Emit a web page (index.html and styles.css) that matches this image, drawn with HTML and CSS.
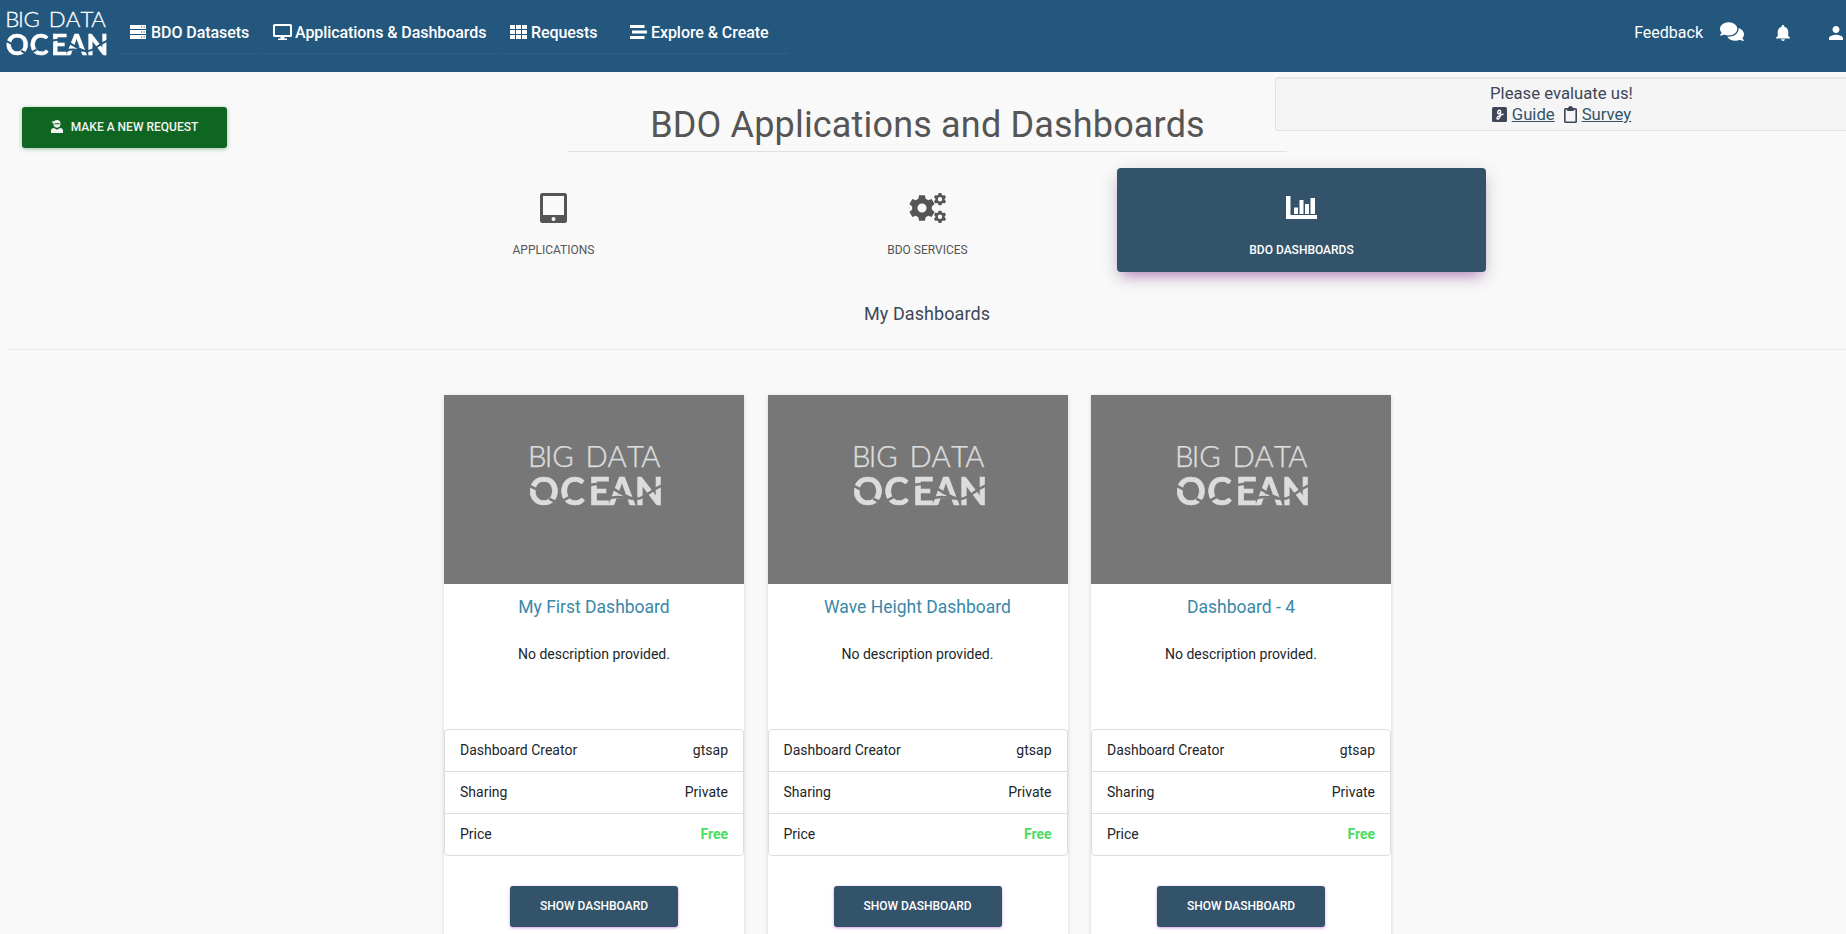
FILE: index.html
```
<!DOCTYPE html>
<html lang="en">
<head>
<meta charset="utf-8">
<title>BDO Applications and Dashboards</title>
<link rel="stylesheet" href="styles.css">
</head>
<body>
<svg class="defs" width="0" height="0">
  <defs>
    <mask id="wave" maskUnits="userSpaceOnUse" x="-5" y="-5" width="145" height="75">
      <rect x="-5" y="-5" width="145" height="75" fill="#fff"/>
      <path d="M-2 38.500L8 43.500M19 52L29 57M29 56L39 50.500M60 38.500Q69 36 77 39.500C86 43 94 51 106 53M78 52C88 47 98 54 109 51.500C117 49 122 42 132 38.500" fill="none" stroke="#000" stroke-width="2.600"/>
    </mask>
    <symbol id="logo" viewBox="0 0 130 60">
      <text class="logo-thin" x="-2 14.700 22 45 55 77 96.300 110.300" y="21">BIG DATA</text>
      <g mask="url(#wave)"><text class="logo-bold" x="-1.300 30 58 78.400 104" y="57.800">OCEAN</text></g>
    </symbol>
    <symbol id="gear" viewBox="-12 -12 24 24">
      <path fill-rule="evenodd" d="M-2.700 -11.800H2.700L3.400 -8.500L5.700 -7.200L8.900 -8.300L11.600 -3.600L9.100 -1.400V1.400L11.600 3.600L8.900 8.300L5.700 7.200L3.400 8.500L2.700 11.800H-2.700L-3.400 8.500L-5.700 7.200L-8.900 8.300L-11.600 3.600L-9.100 1.400V-1.400L-11.600 -3.600L-8.900 -8.300L-5.700 -7.200L-3.400 -8.500ZM4.200 0A4.200 4.200 0 1 0 -4.200 0A4.200 4.200 0 1 0 4.200 0Z"/>
    </symbol>
  </defs>
</svg>

<header class="navbar">
  <svg class="brand"><use href="#logo"/></svg>
  <nav class="menu">
    <a class="item datasets"><svg width="18" height="14" viewBox="0 0 18 14"><path d="M1 0H17V4H1ZM1 5H17V9H1ZM1 10H17V14H1Z"/><path class="cut" d="M12 1.500h1.200v1H12zM14.500 1.500h1.200v1h-1.200zM12 6.500h1.200v1H12zM14.500 6.500h1.200v1h-1.200zM12 11.500h1.200v1H12zM14.500 11.500h1.200v1h-1.200z"/></svg><span>BDO Datasets</span></a>
    <a class="item apps"><svg width="19" height="16" viewBox="0 0 19 16"><path fill-rule="evenodd" d="M1.500 0H17.500Q19 0 19 1.500V11.500Q19 13 17.500 13H11.500V14.500H14V16H5V14.500H7.500V13H1.500Q0 13 0 11.500V1.500Q0 0 1.500 0ZM2 2V11H17V2Z"/></svg><span>Applications &amp; Dashboards</span></a>
    <a class="item requests"><svg width="17" height="14" viewBox="0 0 17 14"><path d="M0 0H5V4H0ZM6 0H11V4H6ZM12 0H17V4H12ZM0 5H5V9H0ZM6 5H11V9H6ZM12 5H17V9H12ZM0 10H5V14H0ZM6 10H11V14H6ZM12 10H17V14H12Z"/></svg><span>Requests</span></a>
    <a class="item explore"><svg width="17" height="14" viewBox="0 0 17 14"><path d="M0 0H14.500V3H0ZM2 5.500H17V8.500H2ZM0 11H14.500V14H0Z"/></svg><span>Explore &amp; Create</span></a>
  </nav>
  <div class="user">
    <span class="feedback">Feedback</span>
    <svg class="chat" width="24" height="19" viewBox="0 32 576 448"><path d="M416 192c0-88.400-93.100-160-208-160S0 103.600 0 192c0 34.300 14.100 65.900 38 92-13.400 30.200-35.500 54.200-35.800 54.500-2.200 2.300-2.800 5.700-1.500 8.700S4.800 352 8 352c36.600 0 66.900-12.300 88.700-25 32.200 15.700 70.300 25 111.300 25 114.900 0 208-71.600 208-160zm122 220c23.900-26 38-57.700 38-92 0-66.900-53.500-124.200-129.300-148.100.9 6.600 1.300 13.300 1.300 20.100 0 105.900-107.700 192-240 192-10.800 0-21.300-.8-31.700-1.900C207.800 439.600 281.800 480 368 480c41 0 79.100-9.200 111.300-25 21.800 12.700 52.100 25 88.700 25 3.200 0 6.100-1.900 7.300-4.800 1.300-2.900.7-6.300-1.500-8.700-.3-.3-22.400-24.200-35.800-54.500z"/></svg>
    <svg class="bell" width="14" height="16" viewBox="4 2.500 16 19.500" preserveAspectRatio="none"><path d="M12 22c1.100 0 2-.9 2-2h-4c0 1.100.89 2 2 2zm6-6v-5c0-3.070-1.640-5.640-4.500-6.320V4c0-.83-.67-1.500-1.500-1.500s-1.500.67-1.500 1.500v.68C7.630 5.360 6 7.920 6 11v5l-2 2v1h16v-1l-2-2z"/></svg>
    <svg class="person" width="14" height="14" viewBox="4 4 16 16"><path d="M12 12c2.210 0 4-1.790 4-4s-1.790-4-4-4-4 1.790-4 4 1.790 4 4 4zm0 2c-2.670 0-8 1.340-8 4v2h16v-2c0-2.660-5.330-4-8-4z"/></svg>
  </div>
</header>

<aside class="evaluate">
  <div>Please evaluate us!</div>
  <div class="links">
    <svg width="15" height="15" viewBox="0 0 15 15"><rect width="15" height="15" rx="1.500"/><path class="glyph" d="M8.600 4.200C8.200 2.600 5.800 3 5.700 5.300S8 7.300 8.700 4.200L8.100 9C7.600 12.800 4.800 12.800 5 11S8.500 8.700 11.500 6.800"/></svg>
    <a>Guide</a>
    <svg class="clip" width="13" height="17" viewBox="0 0 12 17" preserveAspectRatio="none"><path fill-rule="evenodd" d="M1.500 2H3.700Q4.200 0 6 0T8.300 2H10.500Q12 2 12 3.500V15.500Q12 17 10.500 17H1.500Q0 17 0 15.500V3.500Q0 2 1.500 2ZM1.500 3.800V15.500H10.500V3.800H9V5H3V3.800Z"/></svg>
    <a>Survey</a>
  </div>
</aside>

<main>
  <div class="top">
    <button class="btn request"><svg width="12" height="13" viewBox="0 0 12 13"><path d="M.5 1.500L3 1.200Q6-1.200 9 1.200L9.500 3.500Q9.500 7.500 6 7.700Q2.500 7.500 2.500 3.800ZM0 13V10.500Q0 8 3 8L6 9.800L9 8Q12 8 12 10.500V13Z"/><path class="mask" d="M3.500 3.200H8.500V4.300H3.500Z"/></svg>Make a new request</button>
    <h1>BDO Applications and Dashboards</h1>
  </div>
  <div class="tabs">
    <a class="tab"><svg width="27" height="30" viewBox="0 0 27 30"><path fill-rule="evenodd" d="M2.500 0H24.500Q27 0 27 2.500V27.500Q27 30 24.500 30H2.500Q0 30 0 27.500V2.500Q0 0 2.500 0ZM3 3V22H24V3ZM15.500 26A2 2 0 1 0 11.500 26A2 2 0 1 0 15.500 26Z"/></svg><span>Applications</span></a>
    <a class="tab"><svg width="38" height="30" viewBox="0 0 38 30"><use href="#gear" x="0" y="1.500" width="26" height="27"/><use href="#gear" x="24.500" y="0" width="13" height="12.500"/><use href="#gear" x="24.500" y="17.500" width="13" height="12.500"/></svg><span>BDO Services</span></a>
    <a class="tab active"><svg width="31" height="30" viewBox="0 0 31 30"><path d="M0 3H4.500V22H31V26H0ZM8 14.500H12V21H8ZM13.500 7H17.500V21H13.500ZM19 11H23V21H19ZM24.500 5H29V21H24.500Z"/></svg><span>BDO Dashboards</span></a>
  </div>
  <h2>My Dashboards</h2>
  <div class="cards">
    <article class="card">
      <div class="cover"><svg><use href="#logo"/></svg></div>
      <h3>My First Dashboard</h3>
      <p>No description provided.</p>
      <ul><li><span>Dashboard Creator</span><span>gtsap</span></li><li><span>Sharing</span><span>Private</span></li><li><span>Price</span><b>Free</b></li></ul>
      <button class="btn show">Show dashboard</button>
    </article>
    <article class="card">
      <div class="cover"><svg><use href="#logo"/></svg></div>
      <h3>Wave Height Dashboard</h3>
      <p>No description provided.</p>
      <ul><li><span>Dashboard Creator</span><span>gtsap</span></li><li><span>Sharing</span><span>Private</span></li><li><span>Price</span><b>Free</b></li></ul>
      <button class="btn show">Show dashboard</button>
    </article>
    <article class="card">
      <div class="cover"><svg><use href="#logo"/></svg></div>
      <h3>Dashboard - 4</h3>
      <p>No description provided.</p>
      <ul><li><span>Dashboard Creator</span><span>gtsap</span></li><li><span>Sharing</span><span>Private</span></li><li><span>Price</span><b>Free</b></li></ul>
      <button class="btn show">Show dashboard</button>
    </article>
  </div>
</main>
</body>
</html>
```
FILE: styles.css
```
* { box-sizing: border-box; }
html, body { height: 934px; overflow: hidden; }
body { margin: 0; background: #f9f9f9; color: #212529; font-family: Roboto, "Liberation Sans", sans-serif; font-size: 14px; }
svg { fill: currentColor; flex: none; }
h1, h2, h3, p, ul { margin: 0; padding: 0; font-weight: 400; }
.defs { position: absolute; }
.logo-thin { font: 300 29px Lato, sans-serif; stroke: currentColor; stroke-width: .4px; }
.logo-bold { font: 700 37px Lato, sans-serif; stroke: currentColor; stroke-width: .6px; }

.navbar { display: flex; align-items: flex-start; height: 72px; padding-left: 6px; background: #23577d; color: #fff; overflow: hidden; }
.brand { width: 101px; height: 46px; margin-top: 11px; }
.menu { display: flex; margin-left: 14px; }
.item { display: flex; align-items: center; height: 54px; padding-top: 11px; font-size: 16px; font-weight: 500; letter-spacing: -.07px; border-bottom: 1px solid #2f6085; white-space: nowrap; }
.item span { padding-top: 2px; line-height: 20px; }
.item .cut { fill: #23577d; }
.datasets { width: 139px; padding-left: 8px; }
.datasets svg { margin-right: 4px; }
.apps { width: 234px; margin-left: 3px; padding-left: 10px; }
.apps svg { margin-right: 3px; }
.requests { width: 106px; margin-left: 4px; padding-left: 9px; }
.requests svg { margin-right: 4px; }
.explore { width: 178px; margin-left: 3px; padding-left: 20px; }
.explore svg { margin-right: 4px; }
.user { display: flex; margin-left: auto; font-size: 16px; }
.feedback { line-height: 20px; margin: 23px 17px 0 0; }
.chat { margin: 22px 32px 0 0; }
.bell { margin: 25px 39px 0 0; }
.person { margin: 26px 3px 0 0; }

.evaluate { position: absolute; left: 1275px; top: 77px; width: 571px; height: 54px; padding: 5px 0 0 1px; border: 1px solid #e3e3e3; border-right: 0; border-radius: 4px 0 0 4px; background: #f5f5f5; box-shadow: inset 0 1px 1px rgba(0,0,0,.05); color: #3f4658; font-size: 16.7px; line-height: 21px; text-align: center; }
.links { display: flex; justify-content: center; align-items: center; gap: 5px; }
.links a { color: #32536a; text-decoration: underline; }
.links .clip { margin-left: 4px; }
.glyph { fill: none; stroke: #fff; stroke-width: 1.400; }

.top { display: grid; grid-template-columns: 546px 719px 1fr; height: 80px; padding-left: 22px; }
.btn { display: flex; align-items: center; justify-content: center; height: 41px; padding: 0 0 2px; border: 0; border-radius: 3px; color: #fff; font: 500 12px Roboto, sans-serif; text-transform: uppercase; }
.request { width: 205px; margin-top: 35px; background: #0f6622; color: #f3f3f3; box-shadow: 0 1px 4px rgba(15,102,34,.4); }
.request svg { margin-right: 8px; }
.request .mask { fill: #0f6622; }
h1 { border-bottom: 1px solid #e0e0e0; color: #555; font-size: 36px; line-height: 42px; letter-spacing: .17px; padding-top: 32px; text-align: center; white-space: nowrap; }

.tabs { display: grid; grid-template-columns: repeat(3, 369px); gap: 5px; margin: 16px 0 0 369px; }
.tab { display: flex; flex-direction: column; align-items: center; height: 104px; padding-top: 25px; border-radius: 4px; color: #555; font-size: 12px; text-transform: uppercase; }
.tab span { margin-top: 20px; line-height: 14px; }
.tab.active { background: #32536a; color: #fff; font-weight: 500; box-shadow: 0 5px 20px rgba(0,0,0,.14), 0 8px 12px -5px rgba(156,39,176,.45); }
h2 { height: 78px; margin-left: 6px; padding: 31px 0 0 2px; border-bottom: 1px solid #ececec; color: #3c4858; font-size: 18px; line-height: 21px; letter-spacing: .08px; text-align: center; }
.cards { display: grid; grid-template-columns: repeat(3, 300px); gap: 23.500px; margin: 45px 0 0 444px; }
.card { height: 560px; background: #fff; box-shadow: 0 1px 4px rgba(0,0,0,.16); text-align: center; }
.cover { height: 189px; padding-top: 51px; background: #777; color: #dcdcdc; }
.cover svg { width: 131px; height: 61px; display: block; margin-left: 86px; }
h3 { padding-top: 12px; color: #3a87a8; font-size: 17.5px; line-height: 22px; }
p { margin-top: 28px; line-height: 16px; }
ul { margin-top: 67px; border: 1px solid #ddd; border-radius: 4px; list-style: none; }
li { display: flex; justify-content: space-between; height: 41px; padding: 0 15px; line-height: 41px; }
li + li { height: 42px; border-top: 1px solid #ddd; }
li b { color: #4bdc62; font-weight: 700; }
.show { width: 168px; margin: 30px auto 0; background: #32536a; box-shadow: 0 1px 3px rgba(156,39,176,.45); }
```
